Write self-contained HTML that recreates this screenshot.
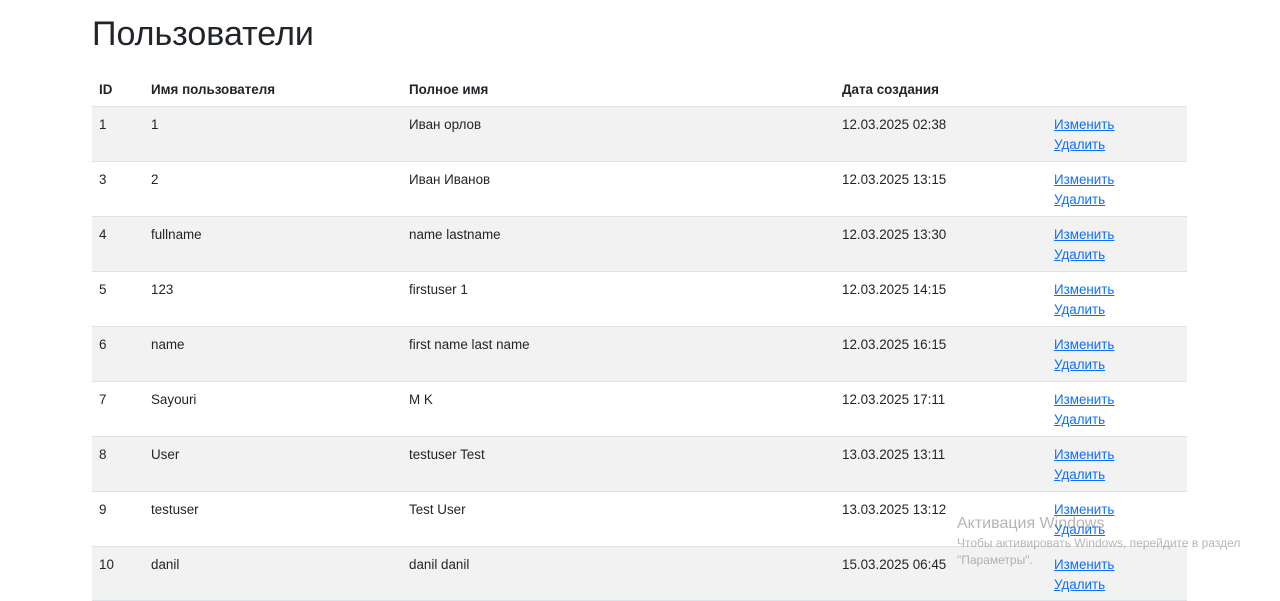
<!DOCTYPE html>
<html><head><meta charset="utf-8"><style>
body{margin:0;width:1280px;height:601px;overflow:hidden;background:#fff;font-family:"Liberation Sans","DejaVu Sans",sans-serif;color:#212529;font-size:13.4px;position:relative}
h1{position:absolute;left:92px;top:12px;margin:0;font-size:34px;font-weight:500;color:#212529;line-height:44px}
.row{position:absolute;left:92px;width:1095px;height:55px;border-top:1px solid #dee2e6;box-sizing:border-box}
.row.s{background:#f2f2f2}
.c{position:absolute;top:8px;line-height:20px}
.hd{position:absolute;left:92px;top:72px;width:1095px;height:35px;font-weight:bold}
.hd .c{top:8px}
a{color:#0d6efd;text-decoration:underline;display:block}
.wm{position:absolute;left:957px;top:513px;color:rgba(120,120,120,.55);pointer-events:none}
</style></head><body>
<h1>Пользователи</h1>
<div class="hd"><div class="c" style="left:7px">ID</div><div class="c" style="left:59px">Имя пользователя</div><div class="c" style="left:317px">Полное имя</div><div class="c" style="left:750px">Дата создания</div></div>
<div class="row s" style="top:106px"><div class="c" style="left:7px">1</div><div class="c" style="left:59px">1</div><div class="c" style="left:317px">Иван орлов</div><div class="c" style="left:750px">12.03.2025 02:38</div><div class="c" style="left:962px"><a>Изменить</a><a>Удалить</a></div></div>
<div class="row" style="top:161px"><div class="c" style="left:7px">3</div><div class="c" style="left:59px">2</div><div class="c" style="left:317px">Иван Иванов</div><div class="c" style="left:750px">12.03.2025 13:15</div><div class="c" style="left:962px"><a>Изменить</a><a>Удалить</a></div></div>
<div class="row s" style="top:216px"><div class="c" style="left:7px">4</div><div class="c" style="left:59px">fullname</div><div class="c" style="left:317px">name lastname</div><div class="c" style="left:750px">12.03.2025 13:30</div><div class="c" style="left:962px"><a>Изменить</a><a>Удалить</a></div></div>
<div class="row" style="top:271px"><div class="c" style="left:7px">5</div><div class="c" style="left:59px">123</div><div class="c" style="left:317px">firstuser 1</div><div class="c" style="left:750px">12.03.2025 14:15</div><div class="c" style="left:962px"><a>Изменить</a><a>Удалить</a></div></div>
<div class="row s" style="top:326px"><div class="c" style="left:7px">6</div><div class="c" style="left:59px">name</div><div class="c" style="left:317px">first name last name</div><div class="c" style="left:750px">12.03.2025 16:15</div><div class="c" style="left:962px"><a>Изменить</a><a>Удалить</a></div></div>
<div class="row" style="top:381px"><div class="c" style="left:7px">7</div><div class="c" style="left:59px">Sayouri</div><div class="c" style="left:317px">M K</div><div class="c" style="left:750px">12.03.2025 17:11</div><div class="c" style="left:962px"><a>Изменить</a><a>Удалить</a></div></div>
<div class="row s" style="top:436px"><div class="c" style="left:7px">8</div><div class="c" style="left:59px">User</div><div class="c" style="left:317px">testuser Test</div><div class="c" style="left:750px">13.03.2025 13:11</div><div class="c" style="left:962px"><a>Изменить</a><a>Удалить</a></div></div>
<div class="row" style="top:491px"><div class="c" style="left:7px">9</div><div class="c" style="left:59px">testuser</div><div class="c" style="left:317px">Test User</div><div class="c" style="left:750px">13.03.2025 13:12</div><div class="c" style="left:962px"><a>Изменить</a><a>Удалить</a></div></div>
<div class="row s" style="top:546px;border-bottom:1px solid #dee2e6"><div class="c" style="left:7px">10</div><div class="c" style="left:59px">danil</div><div class="c" style="left:317px">danil danil</div><div class="c" style="left:750px">15.03.2025 06:45</div><div class="c" style="left:962px"><a>Изменить</a><a>Удалить</a></div></div>
<div class="wm"><div style="font-size:16px;line-height:22px">Активация Windows</div><div style="font-size:12px;line-height:17px">Чтобы активировать Windows, перейдите в раздел<br>"Параметры".</div></div>
</body></html>
